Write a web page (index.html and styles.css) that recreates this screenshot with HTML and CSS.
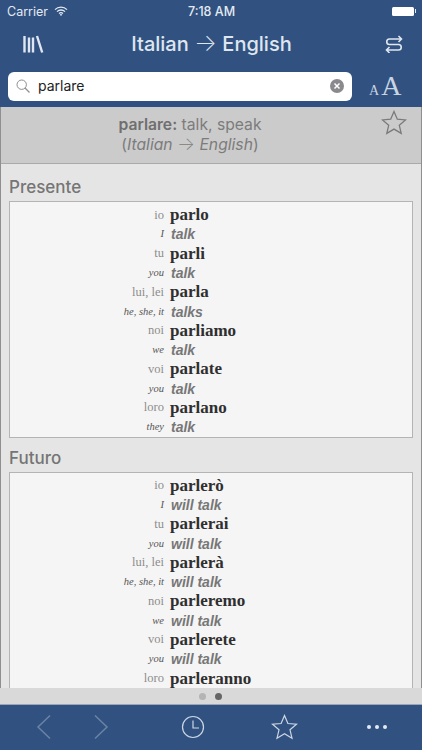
FILE: index.html
```html
<!DOCTYPE html>
<html lang="it">
<head>
<meta charset="utf-8">
<title>Italian → English</title>
<link rel="stylesheet" href="styles.css">
</head>
<body>
<div class="app">
  <header class="top">
    <div class="status">
      <div class="status-left"><span>Carrier</span>
        <svg class="wifi" viewBox="0 0 14 10" width="14" height="10"><path d="M1 3.600a8.600 8.600 0 0 1 12 0M3 5.600a5.800 5.800 0 0 1 8 0M5 7.500a3 3 0 0 1 4 0" fill="none" stroke="#e4eaf2" stroke-width="1.300"/><path d="M7 10 5.700 8.500a2 2 0 0 1 2.600 0z" fill="#e4eaf2"/></svg>
      </div>
      <span class="time">7:18 AM</span>
      <div class="battery"><span class="batt-body"></span><span class="batt-tip"></span></div>
    </div>
    <div class="nav">
      <svg class="nav-lib" viewBox="0 0 22 18" width="22" height="18"><path d="M2.500 1v16.500M7 2.500v15M11 2.500v15M15 1l5.200 16.500" fill="none" stroke="#dfe6ef" stroke-width="2.400"/></svg>
      <h1 class="title">Italian <span class="arr">→</span> English</h1>
      <svg class="nav-swap" viewBox="0 0 18 18" width="18" height="18"><path d="M16.500 4H4.500a2.700 2.700 0 0 0 0 5.500h9a2.700 2.700 0 0 1 0 5.500H1.500M13.500 1l3 3-3 3M4.500 12l-3 3 3 3" fill="none" stroke="#dfe6ef" stroke-width="1.600"/></svg>
    </div>
    <div class="search-row">
      <div class="search">
        <svg viewBox="0 0 14 14" width="14" height="14"><circle cx="5.700" cy="5.700" r="4.700" fill="none" stroke="#8e8e93" stroke-width="1"/><path d="M9 9l4.500 4.500" stroke="#8e8e93" stroke-width="1.200"/></svg>
        <span class="query">parlare</span>
        <svg class="clear" viewBox="0 0 14 14" width="14" height="14"><circle cx="7" cy="7" r="7" fill="#8a8a8e"/><path d="M4.500 4.500l5 5M9.500 4.500l-5 5" stroke="#fff" stroke-width="1.500"/></svg>
      </div>
      <div class="font-size"><span class="a-small">A</span><span class="a-big">A</span></div>
    </div>
  </header>
  <main class="content">
    <section class="banner">
      <div class="banner-text">
        <div><b>parlare:</b> talk, speak</div>
        <div>(<i>Italian <span class="arr">→</span> English</i>)</div>
      </div>
      <svg class="banner-star" viewBox="0 0 26 25" width="26" height="25"><path d="M13 1.500l3.300 7.700 8.200.7-6.200 5.400 1.900 8.100-7.200-4.300-7.200 4.300 1.900-8.100L1.500 9.900l8.200-.7z" fill="none" stroke="#7a7a7a" stroke-width="1.300"/></svg>
    </section>
    <h2 class="tense">Presente</h2>
    <div class="table">
      <div class="row"><span class="p">io</span><span class="v">parlo</span></div>
      <div class="row"><span class="p e">I</span><span class="t">talk</span></div>
      <div class="row"><span class="p">tu</span><span class="v">parli</span></div>
      <div class="row"><span class="p e">you</span><span class="t">talk</span></div>
      <div class="row"><span class="p">lui, lei</span><span class="v">parla</span></div>
      <div class="row"><span class="p e">he, she, it</span><span class="t">talks</span></div>
      <div class="row"><span class="p">noi</span><span class="v">parliamo</span></div>
      <div class="row"><span class="p e">we</span><span class="t">talk</span></div>
      <div class="row"><span class="p">voi</span><span class="v">parlate</span></div>
      <div class="row"><span class="p e">you</span><span class="t">talk</span></div>
      <div class="row"><span class="p">loro</span><span class="v">parlano</span></div>
      <div class="row"><span class="p e">they</span><span class="t">talk</span></div>
    </div>
    <h2 class="tense">Futuro</h2>
    <div class="table open">
      <div class="row"><span class="p">io</span><span class="v">parlerò</span></div>
      <div class="row"><span class="p e">I</span><span class="t">will talk</span></div>
      <div class="row"><span class="p">tu</span><span class="v">parlerai</span></div>
      <div class="row"><span class="p e">you</span><span class="t">will talk</span></div>
      <div class="row"><span class="p">lui, lei</span><span class="v">parlerà</span></div>
      <div class="row"><span class="p e">he, she, it</span><span class="t">will talk</span></div>
      <div class="row"><span class="p">noi</span><span class="v">parleremo</span></div>
      <div class="row"><span class="p e">we</span><span class="t">will talk</span></div>
      <div class="row"><span class="p">voi</span><span class="v">parlerete</span></div>
      <div class="row"><span class="p e">you</span><span class="t">will talk</span></div>
      <div class="row"><span class="p">loro</span><span class="v">parleranno</span></div>
    </div>
  </main>
  <div class="pager"><span class="dot"></span><span class="dot on"></span></div>
  <footer class="bar">
    <svg class="b-back" viewBox="0 0 16 26" width="16" height="26"><path d="M14 1.500 2 13l12 11.500" fill="none" stroke="#6b83a5" stroke-width="1.500"/></svg>
    <svg class="b-fwd" viewBox="0 0 16 26" width="16" height="26"><path d="M2 1.500 14 13 2 24.500" fill="none" stroke="#6b83a5" stroke-width="1.500"/></svg>
    <svg class="b-clock" viewBox="0 0 24 24" width="24" height="24"><circle cx="12" cy="12" r="10.500" fill="none" stroke="#cdd7e4" stroke-width="1.200"/><path d="M12 5.500V13h6" fill="none" stroke="#cdd7e4" stroke-width="1.200"/></svg>
    <svg class="b-star" viewBox="0 0 27 26" width="27" height="26"><path d="M13.500 1.500l3.400 8 8.600.7-6.500 5.600 2 8.400-7.500-4.500-7.500 4.500 2-8.400-6.500-5.600 8.600-.7z" fill="none" stroke="#cdd7e4" stroke-width="1.200"/></svg>
    <svg class="b-more" viewBox="0 0 22 6" width="22" height="6"><circle cx="3" cy="3" r="2" fill="#e4eaf2"/><circle cx="11" cy="3" r="2" fill="#e4eaf2"/><circle cx="19" cy="3" r="2" fill="#e4eaf2"/></svg>
  </footer>
</div>
</body>
</html>
```
FILE: styles.css
```css
* { box-sizing: border-box; margin: 0; padding: 0; }
html, body { width: 422px; height: 750px; overflow: hidden; }
body { font-family: "Inter", "Liberation Sans", sans-serif; background: #315280; }
.app { width: 422px; height: 750px; display: flex; flex-direction: column; overflow: hidden; }

.top { background: #315280; height: 107px; flex: none; color: #dfe6ef; }
.status { height: 22px; display: grid; grid-template-columns: 1fr auto 1fr; align-items: center; padding: 0 6px 0 7px; font-size: 12.500px; color: #e4eaf2; }
.status-left { display: flex; align-items: center; gap: 6px; }
.time { font-weight: 500; font-size: 12.500px; }
.battery { justify-self: end; display: flex; align-items: center; }
.batt-body { width: 22px; height: 9px; background: #fff; border-radius: 1.500px; }
.batt-tip { width: 1.500px; height: 4px; background: #e4eaf2; margin-left: 1px; }

.nav { height: 43px; display: grid; grid-template-columns: 1fr auto 1fr; align-items: center; padding: 0 19px 0 20px; }
.nav-lib { margin-left: 2px; }
.nav-swap { justify-self: end; }
.title { font-size: 20px; font-weight: 500; color: #dfe6ef; }
.arr { font-family: "Inter", sans-serif; font-weight: 200; font-style: normal; font-size: 1.200em; line-height: 1; }

.search-row { display: flex; align-items: center; padding-left: 8px; gap: 17px; height: 30px; margin-top: 6px; }
.search { width: 344px; height: 29px; background: #fff; border-radius: 6px; display: flex; align-items: center; padding: 0 8px; gap: 8px; }
.query { flex: 1; font-size: 14px; color: #222; margin-bottom: 2px; }
.font-size { display: flex; align-items: baseline; gap: 2px; font-family: "Liberation Serif", serif; color: #c9d4e2; line-height: 1; }
.a-small { font-size: 14px; }
.a-big { font-size: 28px; }

.content { flex: 1; min-height: 0; overflow: hidden; background: #e5e5e5; border-left: 1px solid #8f8f8f; border-right: 1px solid #8f8f8f; }
.banner { height: 57px; background: #cbcbcb; border-bottom: 1px solid #aaa; display: flex; align-items: center; position: relative; justify-content: center; color: #7c7c7c; font-size: 15.700px; line-height: 20.500px; text-align: center; padding-right: 42px; }
.banner-text b { font-weight: 600; color: #6f6f6f; }
.banner-star { position: absolute; right: 14px; top: 3px; }

.tense { font-size: 17px; font-weight: 500; color: #757575; margin: 13px 0 4px 8px; line-height: 20px; }
.table { margin: 0 8px; background: #f5f5f5; border: 1px solid #b4b4b4; padding: 3px 0 0; }
.table.open { border-bottom: 0; padding-bottom: 0; }
.table + .tense { margin-top: 10px; }
.row { height: 19.300px; display: grid; grid-template-columns: 154px 1fr; column-gap: 6px; align-items: center; }
.p { text-align: right; font-family: "Liberation Serif", serif; font-size: 12.500px; color: #8d8d8d; }
.p.e { font-style: italic; font-size: 10.500px; color: #555; }
.v { font-family: "Liberation Serif", serif; font-weight: 700; font-size: 17px; color: #2f2f2f; }
.t { font-family: "Liberation Sans", sans-serif; font-style: italic; font-weight: 700; font-size: 14px; color: #777; padding: 1px 0 0 1px; }

.pager { height: 17px; flex: none; background: #d9d9d9; display: flex; justify-content: center; align-items: center; gap: 9px; padding-top: 1px; padding-right: 1px; border-bottom: 1px solid #9aa6b8; }
.dot { width: 7px; height: 7px; border-radius: 50%; background: #b4b4b4; }
.dot.on { background: #666; }

.bar { height: 45px; flex: none; background: #315280; display: flex; align-items: center; padding: 0 0 1px 36px; }
.b-fwd { margin-left: 41px; }
.b-clock { margin-left: 72px; }
.b-star { margin-left: 66px; }
.b-more { margin-left: 68px; }
```
